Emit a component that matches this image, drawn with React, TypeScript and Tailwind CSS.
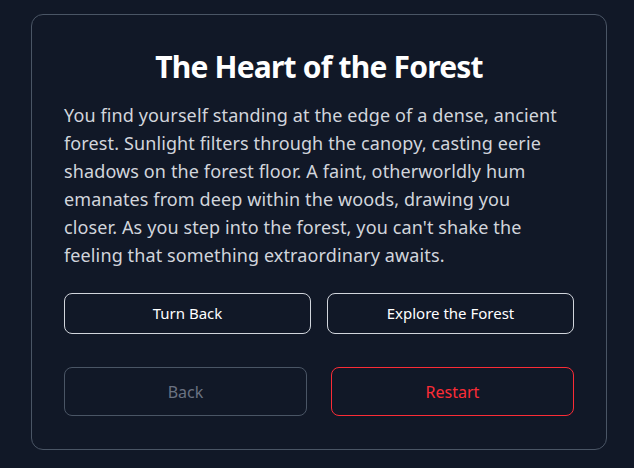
export default function App() {
  return (
    <main
      className="min-h-screen bg-[#111827] pt-[14px] pl-[31px]"
      style={{ fontFamily: '"Segoe UI", "Noto Sans", sans-serif' }}
    >
      <div className="w-[576px] h-[436px] rounded-xl border border-gray-600 px-8 pt-[34px] pb-8 flex flex-col">
        <h1 className="text-3xl font-bold text-white text-center tracking-[-0.8px] mb-4">The Heart of the Forest</h1>

        {/* line breaks pinned so the wrap matches the design */}
        <p className="text-lg text-gray-300 tracking-[0.12px] mb-6">
          You find yourself standing at the edge of a dense, ancient
          <br />
          forest. Sunlight filters through the canopy, casting eerie
          <br />
          shadows on the forest floor. A faint, otherworldly hum
          <br />
          emanates from deep within the woods, drawing you
          <br />
          closer. As you step into the forest, you can't shake the
          <br />
          feeling that something extraordinary awaits.
        </p>

        <div className="grid grid-cols-2 gap-4">
          <button className="h-[41px] rounded-lg border border-gray-300 text-white text-[15px]">Turn Back</button>
          <button className="h-[41px] rounded-lg border border-gray-300 text-white text-[15px]">Explore the Forest</button>
        </div>

        <div className="grid grid-cols-2 gap-6 mt-[33px]">
          <button className="h-[49px] rounded-lg border border-gray-600 text-gray-500 text-base" disabled>
            Back
          </button>
          <button className="h-[49px] rounded-lg border border-red-500 text-red-500 text-base">Restart</button>
        </div>
      </div>
    </main>
  )
}
